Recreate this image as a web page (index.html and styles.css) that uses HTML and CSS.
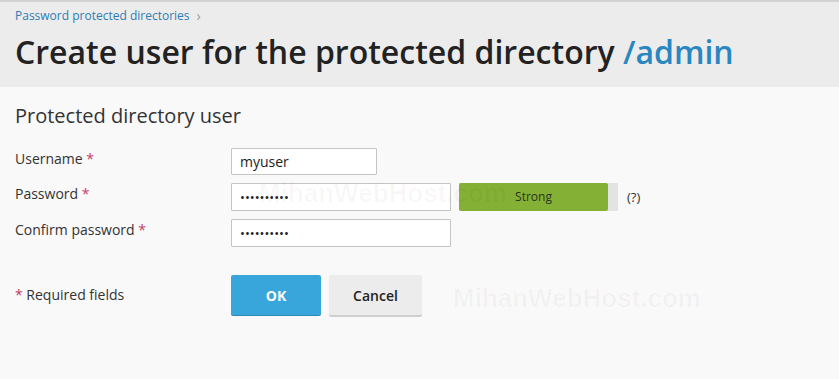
FILE: index.html
```html
<!DOCTYPE html>
<html lang="en">
<head>
<meta charset="utf-8">
<title>Create user for the protected directory</title>
<link rel="stylesheet" href="styles.css">
</head>
<body>
<div class="page">
  <header class="page-head">
    <nav class="crumbs"><a href="#">Password protected directories</a><span class="crumb-sep">&#8250;</span></nav>
    <h1 class="title">Create user for the protected directory <span class="title-path">/admin</span></h1>
  </header>
  <main class="content">
    <h2 class="section-title">Protected directory user</h2>
    <form class="form">
      <div class="form-row">
        <label class="form-label">Username <span class="req">*</span></label>
        <div class="form-field"><input class="input input-short" type="text" value="myuser"></div>
      </div>
      <div class="form-row">
        <label class="form-label">Password <span class="req">*</span></label>
        <div class="form-field">
          <input class="input input-long" type="password" value="mypassword">
          <div class="meter"><div class="meter-fill">Strong</div></div>
          <span class="hint">(?)</span>
        </div>
      </div>
      <div class="form-row">
        <label class="form-label">Confirm password <span class="req">*</span></label>
        <div class="form-field"><input class="input input-long" type="password" value="mypassword"></div>
      </div>
      <div class="form-row actions-row">
        <div class="form-label required-note"><span class="req">*</span> Required fields</div>
        <div class="form-field">
          <button class="btn btn-primary" type="button">OK</button>
          <button class="btn btn-default" type="button">Cancel</button>
        </div>
      </div>
    </form>
  </main>
  <div class="watermark wm-1">MihanWebHost.com</div>
  <div class="watermark wm-2">MihanWebHost.com</div>
</div>
</body>
</html>
```

FILE: styles.css
```css
* { box-sizing: border-box; }

html, body {
  margin: 0;
  padding: 0;
  background: #f9f9f9;
  font-family: "Open Sans", "DejaVu Sans", sans-serif;
  color: #333;
}

.page {
  position: relative;
  min-height: 379px;
  overflow: hidden;
}

.page-head {
  background: #ececec;
  border-top: 2px solid #d2d2d2;
  padding: 6px 15px 0;
  height: 87px;
}

.crumbs {
  font-size: 12px;
  line-height: 16px;
  display: flex;
  align-items: center;
  gap: 7px;
}

.crumbs a {
  color: #2d7cb4;
  text-decoration: none;
}

.crumb-sep {
  color: #9a9a9a;
  font-size: 14px;
}

.title {
  margin: 8px 0 0;
  font-size: 32px;
  line-height: 40px;
  font-weight: 600;
  color: #222;
  letter-spacing: 0;
}

.title-path {
  color: #2887c0;
}

.content {
  padding: 15px 15px 0;
}

.section-title {
  margin: 0 0 18px;
  font-size: 20px;
  line-height: 28px;
  font-weight: 400;
  color: #333;
}

.form-row {
  display: grid;
  grid-template-columns: 216px 1fr;
  align-items: start;
  margin-bottom: 8px;
}

.form-row.pw-row { margin-bottom: 9px; }

.form-label {
  font-size: 14px;
  line-height: 18px;
  padding-top: 2px;
  color: #333;
}

.req {
  color: #c53b6d;
}

.form-field {
  display: flex;
  align-items: center;
}

.input {
  height: 28px;
  border: 1px solid #c4c4c4;
  background: #fff;
  padding: 0 8px;
  font-family: "Open Sans", "DejaVu Sans", sans-serif;
  font-size: 14px;
  color: #222;
  border-radius: 1px;
}

.input-short { width: 146px; height: 27px; }
.input-long { width: 220px; }

input[type="password"] {
  letter-spacing: 0;
  font-size: 13px;
}

.meter {
  margin-left: 8px;
  width: 159px;
  height: 28px;
  background: #e3e3e3;
}

.meter-fill {
  width: 149px;
  height: 28px;
  background: #84b135;
  border-radius: 2px;
  color: #2a3320;
  font-size: 12px;
  line-height: 28px;
  text-align: center;
}

.hint {
  margin-left: 9px;
  font-size: 13px;
  color: #333;
}

.actions-row {
  margin-top: 28px;
  align-items: center;
}

.required-note {
  padding-top: 0;
  font-size: 14px;
}

.btn {
  height: 40px;
  border: 0;
  border-radius: 2px;
  font-family: "Open Sans", "DejaVu Sans", sans-serif;
  font-size: 14px;
  cursor: pointer;
}

.btn-primary {
  width: 90px;
  background: #39a6db;
  color: #fff;
  font-weight: 700;
  box-shadow: 0 1px 0 #2f8ab8;
}

.btn-default {
  width: 93px;
  margin-left: 8px;
  background: #ececec;
  color: #222;
  font-weight: 600;
  box-shadow: 0 2px 0 #cfcfcf;
}

.watermark {
  position: absolute;
  font-family: "Liberation Sans", Arial, sans-serif;
  font-weight: 700;
  font-size: 26px;
  color: rgba(0, 0, 0, 0.03);
  pointer-events: none;
  white-space: nowrap;
}

.wm-1 { left: 453px; top: 283px; }
.wm-2 { left: 259px; top: 178px; }
```
